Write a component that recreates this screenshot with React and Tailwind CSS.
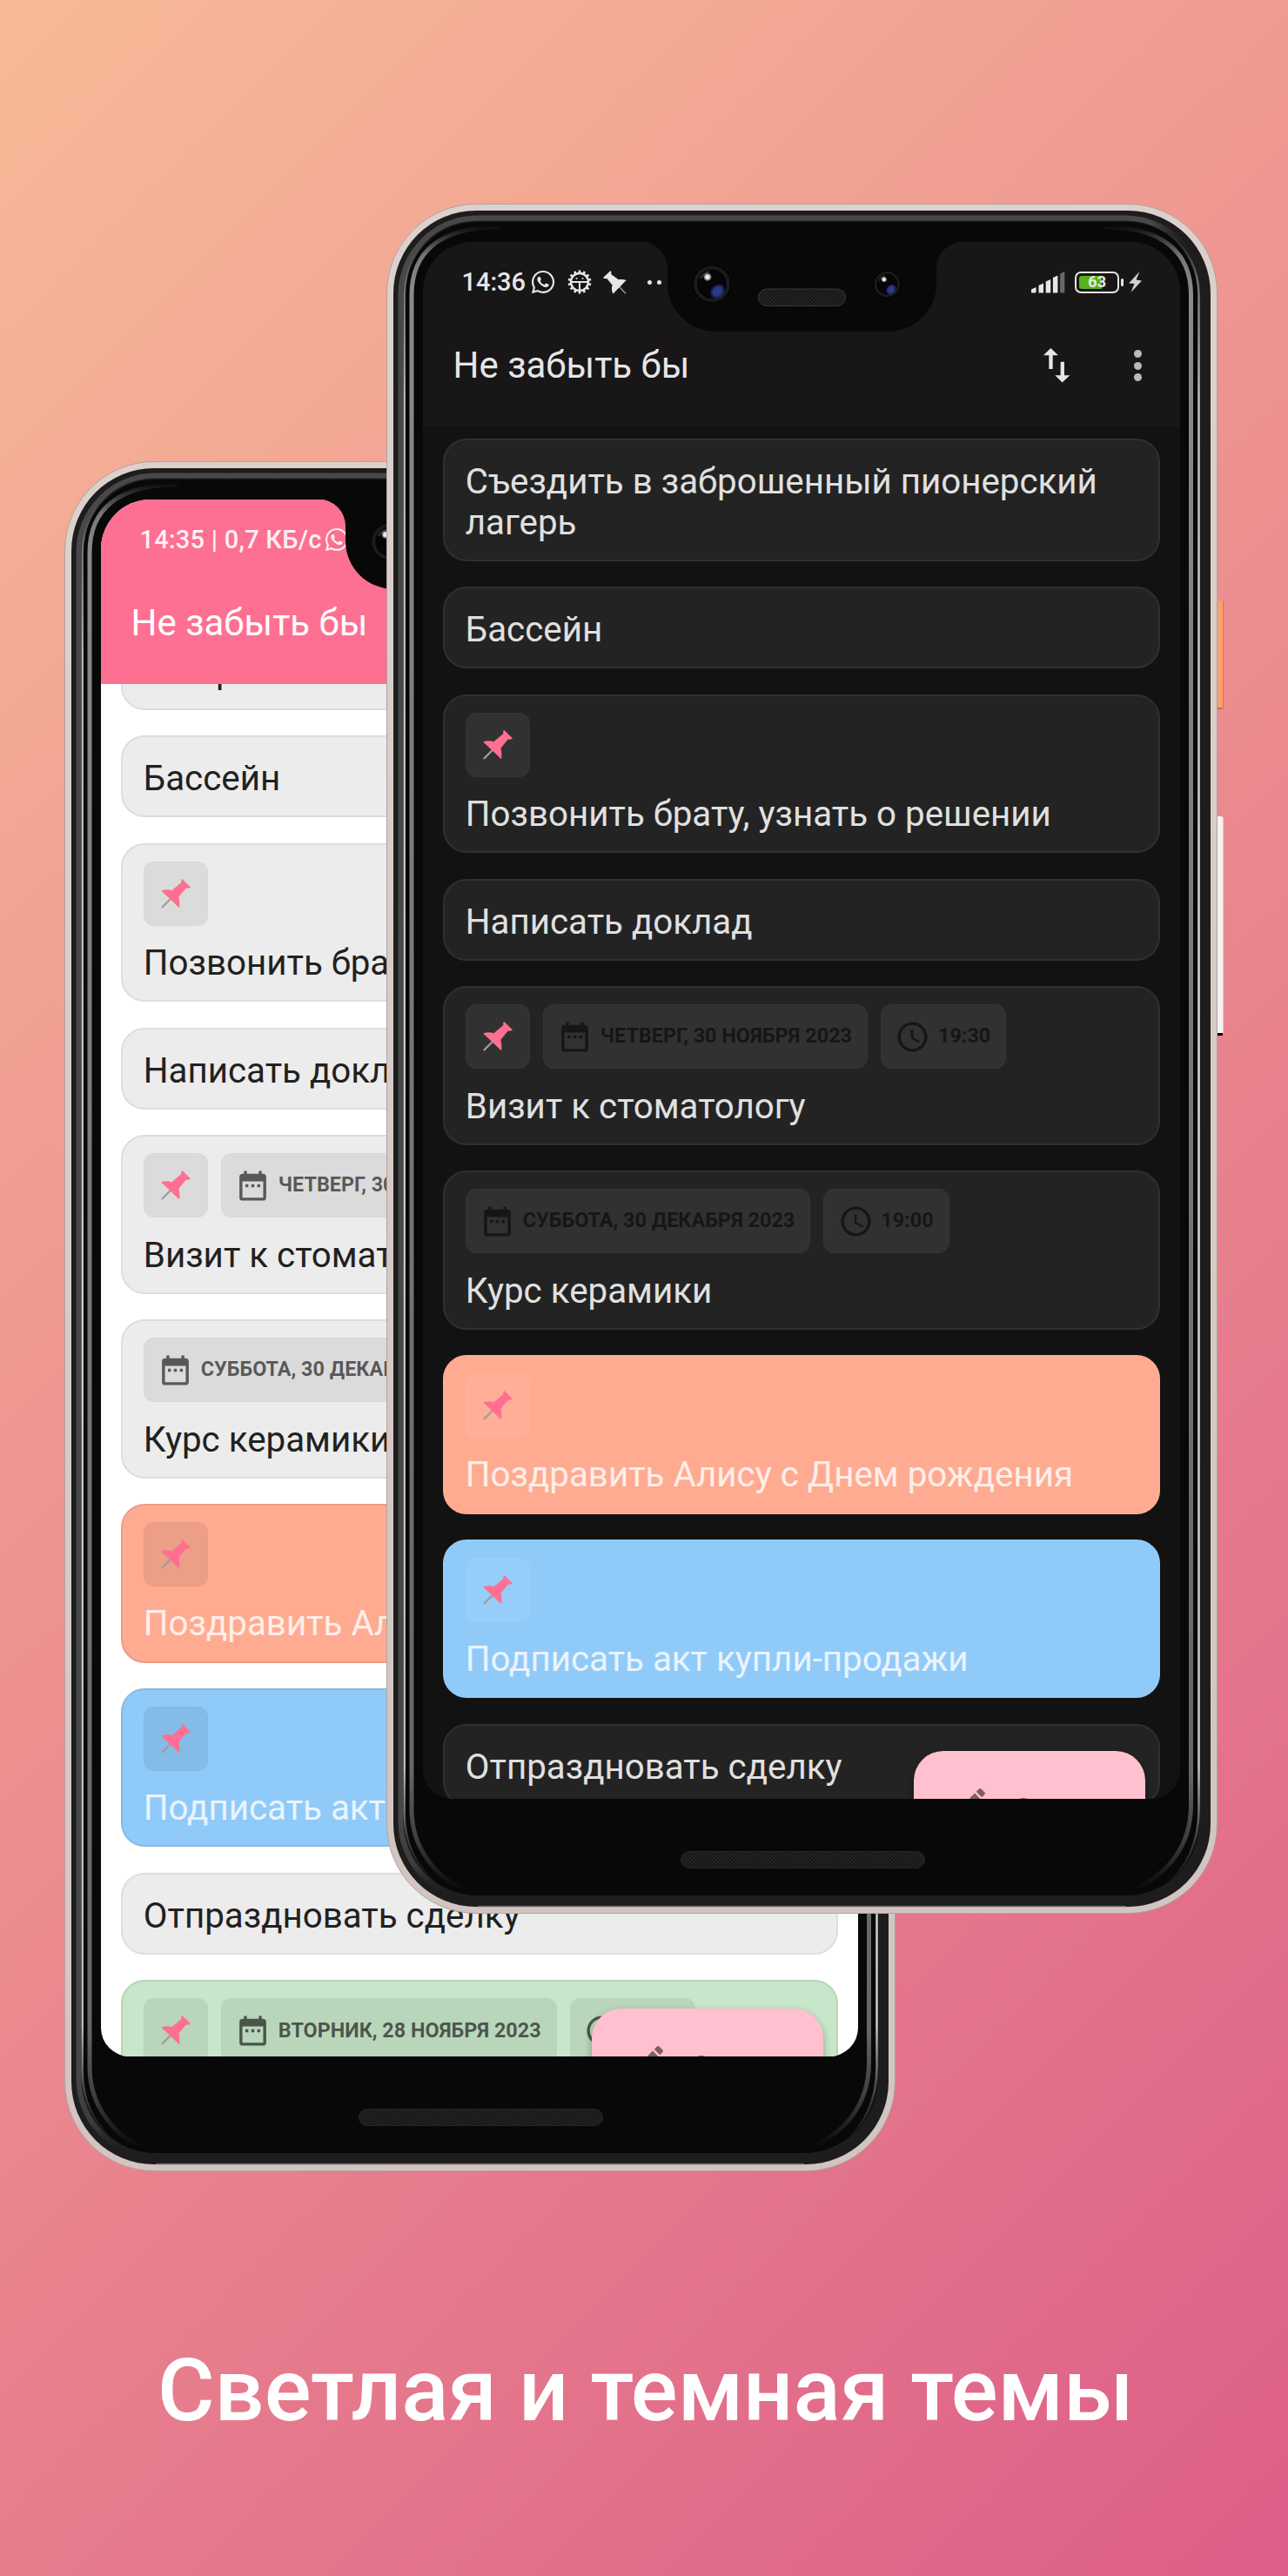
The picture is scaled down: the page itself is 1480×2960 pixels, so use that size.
import React from "react";
import { FaWhatsapp } from "react-icons/fa";

const NOTES = [
  { text: "Съездить в заброшенный пионерский лагерь", tall: true },
  { text: "Бассейн" },
  { text: "Позвонить брату, узнать о решении", pin: true },
  { text: "Написать доклад" },
  { text: "Визит к стоматологу", pin: true, date: "ЧЕТВЕРГ, 30 НОЯБРЯ 2023", time: "19:30" },
  { text: "Курс керамики", date: "СУББОТА, 30 ДЕКАБРЯ 2023", time: "19:00" },
  { text: "Поздравить Алису с Днем рождения", pin: true, color: "orange" },
  { text: "Подписать акт купли-продажи", pin: true, color: "blue" },
  { text: "Отпраздновать сделку" },
  { text: "", pin: true, color: "green", date: "ВТОРНИК, 28 НОЯБРЯ 2023", time: "19:00" },
];

const TINTS = { orange: "bg-[#ffab91]", blue: "bg-[#90caf9]", green: "bg-[#c8e6c9]" };

function PinIcon() {
  return (
    <svg viewBox="226 1075 100 101" className="h-[34px] w-[34px] shrink-0">
      <path d="M228 1173 L260 1141" stroke="#9e9e9e" strokeWidth="7" />
      <path
        d="M297 1074 L327 1104 Q318 1108 311 1106 L286 1137 Q291 1154 288 1174 L226 1115 Q243 1109 262 1114 L295 1087 Q293 1080 297 1074 Z"
        fill="#ff6f91"
      />
    </svg>
  );
}

function CalendarIcon() {
  return (
    <svg viewBox="0 0 24 24" className="h-[41px] w-[41px] shrink-0" fill="currentColor">
      <path d="M19 4h-1V2h-2v2H8V2H6v2H5c-1.11 0-1.99.9-1.99 2L3 20a2 2 0 0 0 2 2h14c1.1 0 2-.9 2-2V6c0-1.1-.9-2-2-2zm0 16H5V9h14v11zM9 13H7v-2h2v2zm4 0h-2v-2h2v2zm4 0h-2v-2h2v2z" />
    </svg>
  );
}

function ClockIcon() {
  return (
    <svg viewBox="0 0 24 24" className="h-[41px] w-[41px] shrink-0" fill="currentColor">
      <path d="M11.99 2C6.47 2 2 6.48 2 12s4.47 10 9.99 10C17.52 22 22 17.52 22 12S17.52 2 11.99 2zM12 20c-4.42 0-8-3.58-8-8s3.58-8 8-8 8 3.58 8 8-3.58 8-8 8zm.5-13H11v6l5.25 3.15.75-1.23-4.5-2.67z" />
    </svg>
  );
}

function EditIcon() {
  return (
    <svg viewBox="0 0 24 24" className="h-[41px] w-[41px] shrink-0" fill="currentColor">
      <path d="M3 17.25V21h3.75L17.81 9.94l-3.75-3.75L3 17.25zM20.71 7.04a.996.996 0 0 0 0-1.41l-2.34-2.34a.996.996 0 0 0-1.41 0l-1.83 1.83 3.75 3.75 1.83-1.83z" />
    </svg>
  );
}

function Chip({ dark, tinted, children, square }) {
  const tone = dark
    ? tinted
      ? "bg-white/[0.06] border-white/[0.02]"
      : "bg-[#313131] border-[#353535]"
    : "bg-black/[0.07] border-black/[0.02]";
  return (
    <div
      className={`flex h-[74px] items-center rounded-[12px] border-[1.5px] ${tone} ${
        square ? "w-[74px] justify-center" : "gap-[8.5px] pl-[15.5px] pr-[17px]"
      }`}
    >
      {children}
    </div>
  );
}

function Note({ note, dark }) {
  const tinted = Boolean(note.color);
  const meta = note.pin || note.date;
  const surface = tinted ? TINTS[note.color] : dark ? "bg-[#232323]" : "bg-[#ececec]";
  const border = dark
    ? tinted
      ? "border-white/[0.02]"
      : "border-[#303030]"
    : tinted
      ? "border-black/[0.08]"
      : "border-[#dddddd]";
  const ink = tinted ? "text-white/80" : dark ? "text-[#e0e0e0]" : "text-[#212121]";
  const height = note.tall ? "h-[140.7px]" : meta ? "h-[182.6px]" : "h-[94.3px]";
  return (
    <article
      className={`flex shrink-0 flex-col rounded-[27px] border-2 px-[23.5px] ${surface} ${border} ${height} ${
        meta ? "pt-[19px]" : "pt-[24px]"
      }`}
    >
      {meta && (
        <div className={`mb-[19.5px] flex gap-[15px] ${dark ? "text-[#161616]" : "text-black/60"}`}>
          {note.pin && (
            <Chip dark={dark} tinted={tinted} square>
              <PinIcon />
            </Chip>
          )}
          {note.date && (
            <Chip dark={dark} tinted={tinted}>
              <CalendarIcon />
              <span className="whitespace-nowrap text-[23.4px] font-bold leading-none">{note.date}</span>
            </Chip>
          )}
          {note.time && (
            <Chip dark={dark} tinted={tinted}>
              <ClockIcon />
              <span className="whitespace-nowrap text-[23.4px] font-bold leading-none">{note.time}</span>
            </Chip>
          )}
        </div>
      )}
      {note.text && <p className={`text-[40.3px] leading-[47.2px] ${ink}`}>{note.text}</p>}
    </article>
  );
}

function GearIcon() {
  const teeth = Array.from({ length: 14 }, (_, i) => i * (360 / 14));
  return (
    <svg viewBox="0 0 28 28" className="h-[28px] w-[28px]" stroke="currentColor" fill="none">
      <circle cx="14" cy="14" r="10" strokeWidth="2.4" />
      {teeth.map((a) => (
        <path key={a} d="M14 3.6V.6" strokeWidth="2.6" transform={`rotate(${a} 14 14)`} />
      ))}
      <path d="M4 14H24M14 14V24" strokeWidth="2" />
      <circle cx="10.5" cy="10" r="1" fill="currentColor" stroke="none" />
      <circle cx="17.5" cy="10" r="1" fill="currentColor" stroke="none" />
    </svg>
  );
}

function StatusPin() {
  return (
    <svg viewBox="790 270 81 81" className="h-[27px] w-[27px]">
      <path d="M868 349 L836 315" stroke="currentColor" strokeWidth="4" opacity=".7" />
      <path
        d="M816 270 L790 294 Q794 299 803 297 L822 320 Q817 334 824 350 L870 303 Q856 298 843 301 L818 283 Q820 276 816 270 Z"
        fill="currentColor"
      />
    </svg>
  );
}

function SignalIcon() {
  return (
    <svg viewBox="0 0 39 25" className="h-[25px] w-[39px]" fill="currentColor">
      <path d="M0 24V20.5L5.6 18V23Q5.6 24.5 4 24.5H1Q0 24.5 0 24Z" />
      <path d="M8.5 24.5V16L14 13.5V24.5Z" />
      <path d="M16.7 24.5V11.5L22.2 9V24.5Z" />
      <path d="M24.9 24.5V7L30.4 4.5V24.5Z" />
      <path d="M33.1 24.5V2.5L38.3 0V24.5Z" opacity=".4" />
    </svg>
  );
}

function Battery() {
  return (
    <div className="flex items-center gap-[2px]">
      <div className="relative flex h-[25px] w-[51px] items-center justify-center rounded-[7px] border-2 border-current p-[3px]">
        <div className="mr-auto h-[15px] w-[26px] rounded-l-[3px] bg-[#56b317]" />
        <span className="absolute inset-0 flex items-center justify-center text-[18.5px] font-bold leading-none">63</span>
      </div>
      <div className="h-[9px] w-[3px] rounded-full bg-current" />
    </div>
  );
}

function StatusBar({ dark }) {
  return (
    <div className="flex h-[40px] items-center">
      <span className={`whitespace-nowrap text-[29px] font-medium leading-none ${dark ? "" : "tracking-[0.25px]"}`}>
        {dark ? "14:36" : "14:35 | 0,7 КБ/с"}
      </span>
      <FaWhatsapp className={`h-[30px] w-[30px] ${dark ? "ml-[5px]" : "ml-[2px]"}`} />
      {dark && (
        <div className="flex items-center">
          <div className="ml-[12.5px]">
            <GearIcon />
          </div>
          <div className="ml-[13px]">
            <StatusPin />
          </div>
          <div className="ml-[24px] flex gap-[6.5px]">
            <i className="h-[5px] w-[5px] rounded-full bg-current" />
            <i className="h-[5px] w-[5px] rounded-full bg-current" />
          </div>
        </div>
      )}
      <div className="ml-auto flex items-center">
        <SignalIcon />
        <div className="ml-[11px]">
          <Battery />
        </div>
        <svg viewBox="0 0 15 24" className="ml-[6px] h-[24px] w-[15px]" fill="currentColor" opacity=".9">
          <path d="M12.5 0L0 13.5L6.5 14L2.5 24L15 10.5L8.5 9.5Z" />
        </svg>
      </div>
    </div>
  );
}

function Header({ dark }) {
  return (
    <header
      className={`flex h-[212px] shrink-0 flex-col pl-[34.5px] pr-[44px] pt-[26.5px] ${
        dark ? "bg-[#181617] text-[#e6e6e6]" : "bg-[#fd7092] text-white"
      }`}
    >
      <div className={`pl-[10px] ${dark ? "" : "opacity-90"}`}>
        <StatusBar dark={dark} />
      </div>
      <div className="mt-[51px] flex h-[50px] items-center">
        <h2 className="text-[42px] leading-[50px]">Не забыть бы</h2>
        <svg viewBox="836 537 91 119" className="ml-auto h-[39.6px] w-[30.3px]" fill="currentColor">
          <path d="M861 537L887 562H868V609H855V562H836ZM901 656L927 631H908V584H895V631H876Z" />
        </svg>
        <div className="ml-[73.5px] flex flex-col gap-[4.3px] text-[#bababa]">
          <i className="h-[9px] w-[9px] rounded-full bg-current" />
          <i className="h-[9px] w-[9px] rounded-full bg-current" />
          <i className="h-[9px] w-[9px] rounded-full bg-current" />
        </div>
      </div>
    </header>
  );
}

function Screen({ dark }) {
  return (
    <div
      className={`relative flex h-[1789.5px] w-[870px] flex-col overflow-hidden rounded-b-[33px] rounded-t-[57px] ${
        dark ? "bg-[#121212]" : "bg-white"
      }`}
    >
      <Header dark={dark} />
      <div className="flex min-h-0 flex-1 flex-col overflow-hidden pl-[23.3px] pr-[22.7px]">
        <div className={`flex flex-col gap-[29.3px] ${dark ? "mt-[14.5px]" : "mt-[-110.5px]"}`}>
          {NOTES.slice(0, dark ? 9 : 10).map((note, i) => (
            <Note key={i} note={note} dark={dark} />
          ))}
        </div>
      </div>
      <button className="absolute right-[40px] top-[1734.5px] flex h-[116px] w-[266px] items-center gap-[29px] rounded-[34px] bg-[#ffc1cf] pl-[46px] text-[#7d5f65] shadow-[0_4px_10px_rgba(0,0,0,0.3)]">
        <EditIcon />
        <span className="pt-[14px] text-[28px] font-medium leading-none">Создать</span>
      </button>
    </div>
  );
}

function Camera({ x, y, r }) {
  return (
    <g transform={`translate(${x} ${y}) scale(${r / 22})`}>
      <circle r="22" fill="#030303" />
      <circle r="18.8" fill="#040404" stroke="#1b1b1b" strokeWidth="4" />
      <circle r="15" fill="#05050a" />
      <ellipse cx="6.5" cy="8.5" rx="10" ry="8" transform="rotate(-45 6.5 8.5)" fill="url(#lens)" />
      <path d="M-13 -6Q-10 -13 -3 -14" stroke="#444" strokeWidth="1.5" fill="none" />
      <circle cx="-5" cy="-8" r="5" fill="url(#glint)" />
    </g>
  );
}

function BodyDetails() {
  return (
    <svg viewBox="0 0 955 1965" className="pointer-events-none absolute left-0 top-0 h-[1965px] w-[955px]" fill="none">
      <defs>
        <radialGradient id="lens">
          <stop offset="0" stopColor="#2f3f8f" />
          <stop offset=".6" stopColor="#27357c" />
          <stop offset="1" stopColor="#27357c" stopOpacity="0" />
        </radialGradient>
        <radialGradient id="glint">
          <stop offset="0" stopColor="#fff" />
          <stop offset=".45" stopColor="#ddd" />
          <stop offset="1" stopColor="#fff" stopOpacity="0" />
        </radialGradient>
        <linearGradient id="thick" gradientUnits="userSpaceOnUse" x1="0" y1="25" x2="0" y2="1937">
          <stop offset="0" stopColor="#999" stopOpacity="0" />
          <stop offset=".018" stopColor="#999" stopOpacity=".75" />
          <stop offset=".04" stopColor="#8a8a8a" />
          <stop offset=".5" stopColor="#777" />
          <stop offset=".93" stopColor="#666" />
          <stop offset=".97" stopColor="#555" stopOpacity=".7" />
          <stop offset="1" stopColor="#555" stopOpacity="0" />
        </linearGradient>
        <linearGradient id="thin" gradientUnits="userSpaceOnUse" x1="0" y1="34" x2="0" y2="1930">
          <stop offset="0" stopColor="#777" stopOpacity="0" />
          <stop offset=".03" stopColor="#888" stopOpacity=".8" />
          <stop offset=".1" stopColor="#bbb" />
          <stop offset=".5" stopColor="#d6d6d6" />
          <stop offset=".93" stopColor="#c4c4c4" />
          <stop offset=".975" stopColor="#888" stopOpacity=".4" />
          <stop offset="1" stopColor="#888" stopOpacity="0" />
        </linearGradient>
        <linearGradient id="rim" gradientUnits="userSpaceOnUse" x1="0" y1="0" x2="955" y2="0">
          <stop offset="0" stopColor="#484848" />
          <stop offset=".92" stopColor="#484848" />
          <stop offset=".965" stopColor="#2a2a2a" stopOpacity="0" />
        </linearGradient>
        <linearGradient id="rimSide" gradientUnits="userSpaceOnUse" x1="0" y1="1850" x2="0" y2="1950">
          <stop offset="0" stopColor="#484848" />
          <stop offset=".6" stopColor="#3c3c3c" />
          <stop offset="1" stopColor="#1d1d1d" stopOpacity="0" />
        </linearGradient>
        <pattern id="mesh" width="4" height="4" patternUnits="userSpaceOnUse">
          <rect width="4" height="4" fill="#161616" />
          <rect width="2" height="2" fill="#242424" />
          <rect x="2" y="2" width="2" height="2" fill="#242424" />
        </pattern>
      </defs>

      <path d="M16.500 1858V105A88 88 0 0 1 105 16.500H850A89 89 0 0 1 938 105" stroke="url(#rim)" strokeWidth="6" />
      <path d="M105 1948A89 89 0 0 1 16.500 1858" stroke="url(#rimSide)" strokeWidth="6" />
      <path d="M60 1932C35 1912 20.800 1885 20.800 1850V105C20.800 78 32 50 60 32" stroke="url(#thin)" strokeWidth="2.200" />
      <path d="M892 1934C919 1914 933.500 1885 933.500 1845V105C933.500 78 922 50 894 32" stroke="url(#thin)" strokeWidth="2.600" />
      <path d="M90 1937C58 1925 29 1890 29 1845V105C29 55 62 27 130 26.500" stroke="url(#thick)" strokeWidth="5" />
      <path d="M859 1937C895 1921 924.500 1890 924.500 1840V105C924.500 55 891 27 825 26.500" stroke="url(#thick)" strokeWidth="5" />
      <path d="M105 1956.500H850" stroke="#6b6565" strokeWidth="1.500" />

      <path d="M285 42H670V43.600H663A31 31 0 0 0 632 75V92A56 55 0 0 1 576 147H379A56 55 0 0 1 323 92V75A31 31 0 0 0 292 43.600H285Z" fill="#080808" />
      <Camera x={374} y={92.3} r={22} />
      <Camera x={575.3} y={92.7} r={15.5} />
      <rect x="427.500" y="98" width="100" height="19.500" rx="9.700" fill="url(#mesh)" stroke="#383838" />
      <rect x="338.500" y="1893.500" width="280" height="19" rx="9.500" fill="url(#mesh)" stroke="#262626" />
    </svg>
  );
}

function Phone({ dark, className }) {
  return (
    <section className={`relative col-start-1 row-start-1 h-[1965px] w-[955px] ${className}`}>
      <div className="absolute left-[955px] top-[456px] flex w-[7px] flex-col gap-[123px]">
        <div className="h-[125px] rounded-r-[3px] border-b-2 border-r border-b-[#c96d45] border-r-[#d9764f] bg-[#ff9f6c]" />
        <div className="h-[252px] rounded-r-[3px] border-b-[3px] border-r border-b-black border-r-[#d8cccc] bg-[#f8f2f2]" />
      </div>
      <div className="h-full rounded-[103px] border border-[#b0a3a0] bg-gradient-to-b from-[#ddd1cd] to-[#d2c5c1] p-[7px]">
        <div className="h-full rounded-[95px] bg-[#1d1d1d] p-[13px]">
          <div className="h-full rounded-[84px] bg-[#080808] pl-[21px] pt-[22.6px]">
            <Screen dark={dark} />
          </div>
        </div>
      </div>
      <BodyDetails />
    </section>
  );
}

export default function App() {
  return (
    <main className="flex h-[2960px] w-[1480px] flex-col overflow-hidden bg-[linear-gradient(135deg,#f8ba97_0%,#eb8c8f_50%,#dd5e88_100%)] font-['Roboto',sans-serif]">
      <div className="grid h-[2660px] grid-cols-1 grid-rows-1">
        <Phone className="ml-[74px] mt-[530px]" />
        <Phone dark className="ml-[444px] mt-[234px]" />
      </div>
      <h1 className="whitespace-nowrap pl-[181px] pt-[26.5px] text-[100.5px] font-[460] leading-[120px] text-white">
        Светлая и темная темы
      </h1>
    </main>
  );
}
